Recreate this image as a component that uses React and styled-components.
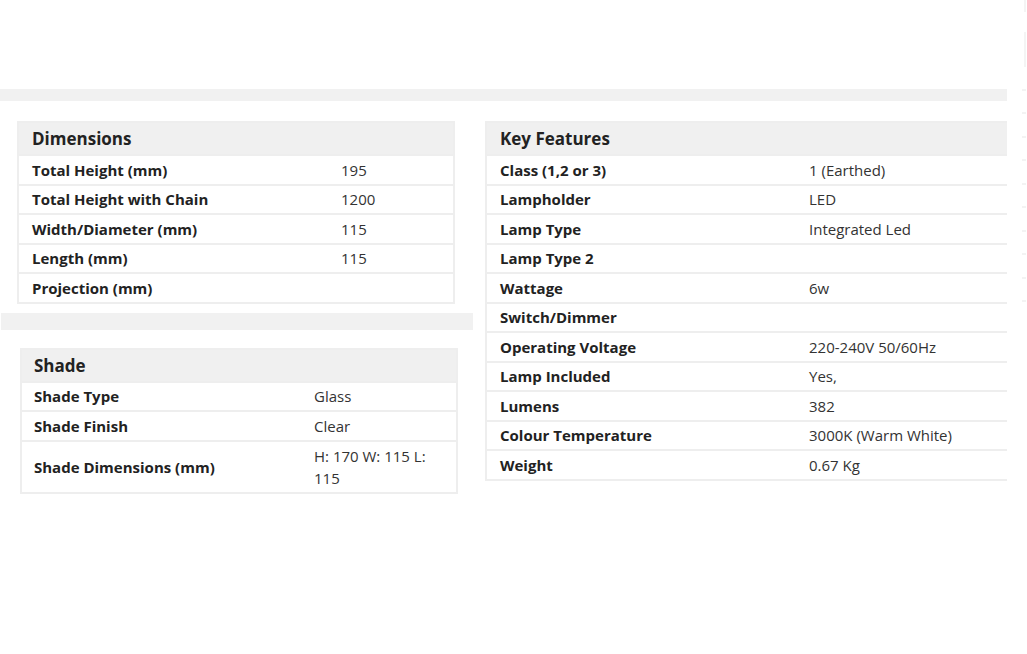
import React from 'react';
import styled, { createGlobalStyle } from 'styled-components';

const GlobalStyle = createGlobalStyle`
    body {
        margin: 0;
        background: #fff;
        font-family: "Open Sans", "Liberation Sans", Arial, sans-serif;
        color: #222;
    }
`;

const Frame = styled.div`
    display: flex;
    align-items: flex-start;
`;

const Page = styled.div`
    width: 1007px;
    flex-shrink: 0;
    overflow: hidden;
    padding-top: 89px;
`;

const Gutter = styled.div`
    flex: 1;
    display: flex;
    flex-direction: column;
    align-items: flex-end;
    padding-right: 1px;
`;

const GutterLine = styled.div`
    width: 2px;
    height: ${props => props.height}px;
    margin-top: ${props => props.top}px;
    background: #f4f4f4;
`;

const GutterTick = styled.div`
    width: 4px;
    height: 2px;
    margin-top: 21.5px;
    background: #f3f3f3;
`;

const Band = styled.div`
    height: ${props => props.height}px;
    background: #f1f1f1;
    margin-left: ${props => props.left || 0}px;
    width: ${props => props.width ? `${props.width}px` : 'auto'};
`;

const Columns = styled.div`
    display: flex;
    align-items: flex-start;
    margin-top: 20px;
`;

const LeftColumn = styled.div`
    width: 473px;
    flex-shrink: 0;
`;

const RightColumn = styled.div`
    flex: 1;
    padding-left: 12px;
    min-width: 0;
`;

const SpecTable = styled.div`
    border: 2px solid #eeeeee;
    border-right-width: ${props => props.open ? 0 : 2}px;
    margin-left: ${props => props.left || 0}px;
    width: ${props => props.width ? `${props.width}px` : 'auto'};
    box-sizing: border-box;
`;

const SpecHeader = styled.div`
    height: 31px;
    display: flex;
    align-items: center;
    padding-left: ${props => props.pad}px;
    background: #f0f0f0;
    font-size: 17px;
    font-weight: 700;
    color: #222;
`;

const SpecRow = styled.div`
    display: grid;
    grid-template-columns: ${props => props.labelWidth}px 1fr;
    border-top: 2px solid #eeeeee;
    min-height: 27.5px;
    align-items: center;
`;

const Label = styled.div`
    padding-left: ${props => props.pad}px;
    font-size: 15px;
    font-weight: 700;
    color: #222;
    line-height: 22px;
`;

const Value = styled.div`
    padding: ${props => props.tall ? '3px 24px 3px 13px' : '0 13px'};
    font-size: 15px;
    color: #333;
    line-height: 22px;
`;

const dimensions = [
    ['Total Height (mm)', '195'],
    ['Total Height with Chain', '1200'],
    ['Width/Diameter (mm)', '115'],
    ['Length (mm)', '115'],
    ['Projection (mm)', ''],
];

const shade = [
    ['Shade Type', 'Glass'],
    ['Shade Finish', 'Clear'],
    ['Shade Dimensions (mm)', 'H: 170 W: 115 L: 115', true],
];

const features = [
    ['Class (1,2 or 3)', '1 (Earthed)'],
    ['Lampholder', 'LED'],
    ['Lamp Type', 'Integrated Led'],
    ['Lamp Type 2', ''],
    ['Wattage', '6w'],
    ['Switch/Dimmer', ''],
    ['Operating Voltage', '220-240V 50/60Hz'],
    ['Lamp Included', 'Yes,'],
    ['Lumens', '382'],
    ['Colour Temperature', '3000K (Warm White)'],
    ['Weight', '0.67 Kg'],
];

const Spec = ({ title, rows, labelWidth, pad, ...rest }) => (
    <SpecTable {...rest}>
        <SpecHeader pad={pad}>{title}</SpecHeader>
        {rows.map(([label, value, tall]) => (
            <SpecRow key={label} labelWidth={labelWidth}>
                <Label pad={pad}>{label}</Label>
                <Value tall={tall}>{value}</Value>
            </SpecRow>
        ))}
    </SpecTable>
);

export default function App() {
    return (
        <>
            <GlobalStyle />
            <Frame>
                <Page>
                    <Band height={12} />
                    <Columns>
                        <LeftColumn>
                            <Spec title="Dimensions" rows={dimensions} labelWidth={309} pad={13} left={17} width={438} />
                            <Band height={17} left={1} width={472} style={{ marginTop: 9 }} />
                            <Spec title="Shade" rows={shade} labelWidth={279} pad={12} left={20} width={438} style={{ marginTop: 18 }} />
                        </LeftColumn>
                        <RightColumn>
                            <Spec title="Key Features" rows={features} labelWidth={309} pad={13} open />
                        </RightColumn>
                    </Columns>
                </Page>
                <Gutter>
                    <GutterLine top={0} height={12} />
                    <GutterLine top={20} height={35} />
                    {Array.from({ length: 10 }).map((_, i) => (
                        <GutterTick key={i} />
                    ))}
                </Gutter>
            </Frame>
        </>
    );
}
